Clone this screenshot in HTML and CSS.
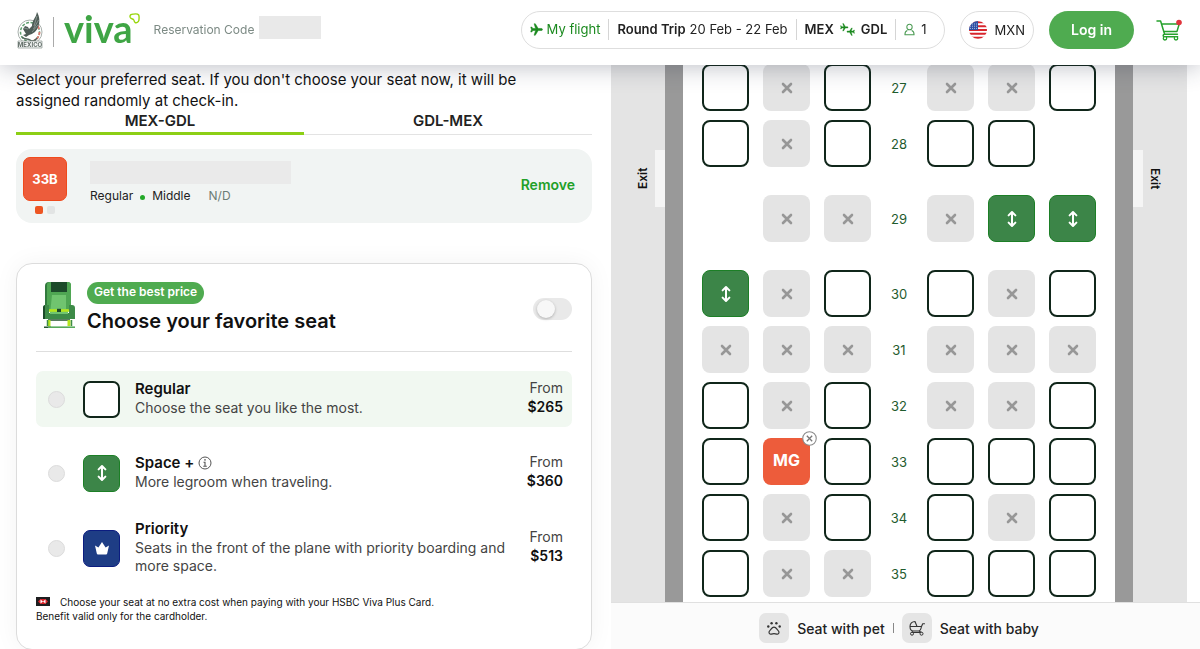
FILE: index.html
```html
<!DOCTYPE html>
<html lang="en">
<head>
    <meta charset="UTF-8">
    <meta name="viewport" content="width=device-width, initial-scale=1.0">
    <title>Viva - Choose your seat</title>
    <link rel="stylesheet" href="styles.css">
</head>
<body>
    <svg class="sprite" aria-hidden="true">
        <symbol id="icon-x" viewBox="0 0 12 12">
            <path d="M2 2l8 8M10 2l-8 8" fill="none" stroke="#979797" stroke-width="2.6" stroke-linecap="round"/>
        </symbol>
        <symbol id="icon-legroom" viewBox="0 0 12 18">
            <path d="M6 2.5v13M2.6 5.4L6 2l3.4 3.4M2.6 12.6L6 16l3.4-3.4" fill="none" stroke="#fff" stroke-width="2" stroke-linecap="round" stroke-linejoin="round"/>
        </symbol>
        <symbol id="icon-plane" viewBox="0 0 24 24">
            <path d="M23 12c0-1.200-1-1.900-2.200-1.900h-5.600L9.800 1.500H7.600l2.700 8.600H5.200L3.300 7.400H1.400L2.600 12l-1.200 4.600h1.900l1.900-2.700h5.100L7.600 22.500h2.200l5.400-8.600h5.600c1.200 0 2.200-.7 2.200-1.900z" fill="#1b8a1f" stroke="#1b8a1f" stroke-width="1"/>
        </symbol>
    </svg>

    <header class="header">
        <a class="brand" href="#" aria-label="Viva home">
            <svg class="crest" viewBox="0 0 28 38">
                <circle cx="14" cy="21" r="12" fill="#fff" stroke="#a8b0ac" stroke-width="1"/>
                <circle cx="14" cy="21" r="9.500" fill="none" stroke="#5f9f70" stroke-width="1.500" stroke-dasharray="3 1.500"/>
                <path d="M23.500 21a9.500 9.500 0 0 1-7 9.200" fill="none" stroke="#e07a72" stroke-width="1.800" stroke-dasharray="3 1.500"/>
                <path d="M20 13a9.500 9.500 0 0 1 3 5" fill="none" stroke="#e07a72" stroke-width="1.800"/>
                <path d="M21 1c3 5 3 11 1 15-1 4-5 7-9 8l-3 2-3-2 3-1-3-5 2-3 3 1 1 2 3-3c0-6 4-8 5-14z" fill="#4e5c57"/>
                <path d="M21 5l-3 10M22.500 9l-5 9M22 14l-6 7M8 17l4 1" stroke="#a8b4ae" stroke-width=".6" fill="none"/>
                <path d="M6 26c3 3 6 1 8 3s5 1 7-2" stroke="#53645d" stroke-width="1.500" fill="none"/>
                <path d="M2 30h24v7H2z" fill="#f3f5f4" stroke="#8a9590" stroke-width=".7"/>
                <text x="14" y="36" text-anchor="middle" class="crest-text">MÉXICO</text>
            </svg>
            <span class="brand-line"></span>
            <span class="logo">viva<svg class="logo-heart" viewBox="0 0 12 12"><path d="M1.200 4.500C.6 1.800 2.800 1 5 1.200c2-.3 4.500-.5 5.600 1 .8 2 .3 4 .2 5.800-.6 2.300-2.800 3.200-4.300 2.200C5.200 9 5.800 7.600 4.600 6.800 3.300 6.300 1.700 6.300 1.200 4.500z" fill="none" stroke="#97d60a" stroke-width="1.500"/></svg></span>
        </a>
        <span class="reservation">Reservation Code</span>
        <span class="reservation-code"></span>

        <button class="trip" type="button">
            <span class="trip-part trip-flight"><svg class="plane" aria-hidden="true"><use href="#icon-plane"/></svg>My flight</span>
            <span class="trip-part"><b>Round Trip</b> 20 Feb - 22 Feb</span>
            <span class="trip-part trip-route"><b>MEX</b>
                <svg class="planes" viewBox="0 0 28 24" aria-hidden="true">
                    <use href="#icon-plane" x="0" y="0" width="16" height="16"/>
                    <use href="#icon-plane" x="-28" y="-24" width="16" height="16" transform="rotate(180)"/>
                </svg>
                <b>GDL</b></span>
            <span class="trip-part trip-people">
                <svg class="person" viewBox="0 0 12 14" aria-hidden="true"><path d="M6 1.200c4 0 3.800 6.200 0 6.200S2 1.200 6 1.200zM3.700 8.200C2 8.600 1 10 1 12.700h10c0-2.700-1-4.100-2.700-4.500" fill="none" stroke="#4a9a52" stroke-width="1.100" stroke-linejoin="round"/></svg>1
            </span>
        </button>
        <button class="currency" type="button">
            <svg class="flag" viewBox="0 0 18 18" aria-hidden="true">
                <clipPath id="flag-clip"><circle cx="9" cy="9" r="9"/></clipPath>
                <g clip-path="url(#flag-clip)">
                    <path d="M0 0h18v18H0z" fill="#fff"/>
                    <path d="M0 1.300h18M0 5.200h18M0 9h18M0 12.800h18M0 16.700h18" stroke="#d8252c" stroke-width="2"/>
                    <path d="M0 0h9v9H0z" fill="#2f50a3"/>
                    <path d="M1 3h7M1 5.200h7M1 7.400h7" stroke="#cfd8ef" stroke-width=".8" stroke-dasharray="1 1"/>
                </g>
            </svg>MXN
        </button>
        <button class="login" type="button">Log in</button>
        <a class="cart" href="#" aria-label="Cart">
            <svg viewBox="0 0 26 22" aria-hidden="true">
                <path d="M1 2h3.600l4 13.200h12.800M5.700 5h17.500l-2.200 7.400H8M8.600 15.200c-1.800 0-2 2.500 0 2.500h13" fill="none" stroke="#26a12c" stroke-width="1.500" stroke-linecap="round" stroke-linejoin="round"/>
                <circle cx="9" cy="19.300" r="1.700" fill="#fff" stroke="#26a12c" stroke-width="1.300"/>
                <circle cx="20" cy="19.300" r="1.700" fill="#fff" stroke="#26a12c" stroke-width="1.300"/>
                <circle cx="23" cy="3.500" r="2.800" fill="#e0343c"/>
            </svg>
        </a>
    </header>

    <main class="page">
        <section class="panel">
            <p class="intro">Select your preferred seat. If you don't choose your seat now, it will be assigned randomly at check-in.</p>
            <div class="tabs" role="tablist">
                <button class="tab active" type="button" role="tab" aria-selected="true">MEX-GDL</button>
                <button class="tab" type="button" role="tab" aria-selected="false">GDL-MEX</button>
            </div>

            <div class="passenger">
                <div class="passenger-seat">
                    <span class="seat-code">33B</span>
                    <span class="legs"><i class="leg on"></i><i class="leg"></i></span>
                </div>
                <div class="passenger-info">
                    <div class="passenger-name"></div>
                    <div class="passenger-meta">
                        <span>Regular</span><i class="dot"></i><span>Middle</span><span class="price-nd">N/D</span>
                    </div>
                </div>
                <button class="remove" type="button">Remove</button>
            </div>

            <div class="card">
                <div class="card-head">
                    <svg class="chair" viewBox="0 0 32 46" aria-hidden="true">
                        <path d="M2 4a4 4 0 0 1 4-4h18a4 4 0 0 1 4 4v24H2z" fill="#327a3e"/>
                        <path d="M4 3a3 3 0 0 1 3-3h18a3 3 0 0 1 3 3v24H4z" fill="#4fa653"/>
                        <path d="M8 0h16v10H8z" fill="#1c4a2a"/>
                        <path d="M9 13h14v19H7z" fill="#70c46f"/>
                        <path d="M0 26a3 3 0 0 1 3-3h3v8h20v-8h3a3 3 0 0 1 3 3v11H0z" fill="#3d8b48"/>
                        <path d="M0 25.500a2.500 2.500 0 0 1 2-2.500V37H0z" fill="#1c4a2a"/>
                        <path d="M7 27h18v5H7z" fill="#70c46f"/>
                        <path d="M6 27.200h20v2.600H6z" fill="#b5e61d"/>
                        <path d="M14 26.800h4v3.200h-4z" fill="#1c4a2a"/>
                        <path d="M5 38h22M1 45.200h7" stroke="#24532f" stroke-width="1.400"/>
                        <path d="M6 38v6M26 38v6" stroke="#b5e61d" stroke-width="3"/>
                        <path d="M4.500 38v6M28.500 38v6" stroke="#3d8b48" stroke-width="1.500"/>
                        <path d="M5 45.200h27" stroke="#57a95b" stroke-width="1.600"/>
                    </svg>
                    <div class="card-title">
                        <span class="badge">Get the best price</span>
                        <h2>Choose your favorite seat</h2>
                    </div>
                    <input class="toggle" type="checkbox" aria-label="Get the best price">
                </div>

                <label class="option highlighted">
                    <input type="radio" name="seat-type">
                    <span class="swatch free"></span>
                    <span class="option-text"><b>Regular</b><span>Choose the seat you like the most.</span></span>
                    <span class="option-price">From<b>$265</b></span>
                </label>
                <label class="option">
                    <input type="radio" name="seat-type">
                    <span class="swatch space"><svg><use href="#icon-legroom"/></svg></span>
                    <span class="option-text">
                        <b>Space + <svg class="info" viewBox="0 0 14 14"><circle cx="7" cy="7" r="6" fill="none" stroke="#555" stroke-width="1"/><path d="M5.500 6.200H7v4M5.300 10.300h3.500" fill="none" stroke="#555" stroke-width="1.100"/><circle cx="7" cy="3.900" r=".8" fill="#555"/></svg></b>
                        <span>More legroom when traveling.</span>
                    </span>
                    <span class="option-price">From<b>$360</b></span>
                </label>
                <label class="option">
                    <input type="radio" name="seat-type">
                    <span class="swatch priority"><svg class="crown" viewBox="0 0 14 13"><path d="M0 3.500l3.400 2L7 0l3.600 5.500 3.400-2L12.200 11.500Q12 12.500 11 12.500H3Q2 12.500 1.800 11.500z" fill="#fff"/></svg></span>
                    <span class="option-text"><b>Priority</b><span>Seats in the front of the plane with priority boarding and more space.</span></span>
                    <span class="option-price">From<b>$513</b></span>
                </label>

                <p class="footnote">
                    <svg class="bank-card" viewBox="0 0 14 9" aria-hidden="true"><path d="M0 0h14v9H0z" fill="#1d1d1f"/><path d="M2 4.500l2.500-2.500h5L12 4.500 9.500 7h-5z" fill="#d8232a"/><path d="M4.500 2.500L7 4.500l-2.500 2zM9.500 2.500L7 4.500l2.500 2z" fill="#fff"/></svg>Choose your seat at no extra cost when paying with your HSBC Viva Plus Card.<br>
                    Benefit valid only for the cardholder.
                </p>
            </div>
        </section>

        <section class="map">
            <div class="plane-body">
                <div class="outside left"><span class="exit">Exit</span><i class="door"></i></div>
                <div class="cabin" id="cabin"></div>
                <div class="outside right"><i class="door"></i><span class="exit">Exit</span></div>
            </div>
            <footer class="legend">
                <span class="legend-icon">
                    <svg viewBox="0 0 16 16" aria-hidden="true"><path d="M8 7.200c2.200 0 2.700 2 4 3.200 2 1.800.8 4.300-1.300 3.700-1.800-.5-3.600-.5-5.400 0C3.200 14.700 2 12.200 4 10.400c1.300-1.200 1.800-3.200 4-3.200z" fill="none" stroke="#333" stroke-width="1.200"/><g fill="#333"><circle cx="2.300" cy="6.500" r="1.200"/><circle cx="5.600" cy="3.200" r="1.200"/><circle cx="10.400" cy="3.200" r="1.200"/><circle cx="13.700" cy="6.500" r="1.200"/></g></svg>
                </span>
                <span>Seat with pet</span>
                <i class="legend-line"></i>
                <span class="legend-icon">
                    <svg viewBox="0 0 16 16" aria-hidden="true"><path d="M1 6.500C1 3.500 3 1.500 6 1.500l2 5M1 6.500h11.500l1.200-2.700h1.800M1 6.500c0 3 1.500 4.500 3.500 4.500h5c2 0 2.500-2 3-4.500M4 11l-1 1.500M10 11l2.500 1.500M3 12.500h9" fill="none" stroke="#333" stroke-width="1.100" stroke-linecap="round" stroke-linejoin="round"/><circle cx="3" cy="13.700" r="1.500" fill="#e5e5e5" stroke="#333"/><circle cx="12.500" cy="13.700" r="1.500" fill="#e5e5e5" stroke="#333"/></svg>
                </span>
                <span>Seat with baby</span>
            </footer>
        </section>
    </main>

    <script>
        // o = free, x = taken, s = Space +, m = selected, - = no seat
        const rows = [
            [27, 'oxoxxo'],
            [28, 'oxooo-'],
            [29, '-xxxss'],
            [30, 'sxooxo'],
            [31, 'xxxxxx'],
            [32, 'oxoxxo'],
            [33, 'omoooo'],
            [34, 'oxooxo'],
            [35, 'oxxooo']
        ];
        const types = { o: 'free', x: 'taken', s: 'space', m: 'selected' };
        const cabin = document.getElementById('cabin');

        function seatContent(type) {
            if (type === 'x') return '<svg class="x"><use href="#icon-x"/></svg>';
            if (type === 's') return '<svg><use href="#icon-legroom"/></svg>';
            if (type === 'm') return 'MG<svg class="seat-remove" viewBox="0 0 14 14"><circle cx="7" cy="7" r="6.300" fill="#fff" stroke="#8a8a8a"/><path d="M4.500 4.500l5 5M9.500 4.500l-5 5" stroke="#777" stroke-width="1.200"/></svg>';
            return '';
        }

        rows.forEach(([number, seats]) => {
            const row = document.createElement('div');
            row.className = number === 29 ? 'row exit-row' : 'row';
            const cells = seats.split('').map((type, i) => {
                if (type === '-') return '<span></span>';
                const disabled = type === 'x' ? ' disabled' : '';
                return `<button type="button" class="seat ${types[type]}" aria-label="${number}${'ABCDEF'[i]}"${disabled}>${seatContent(type)}</button>`;
            });
            cells.splice(3, 0, `<span class="row-number">${number}</span>`);
            row.innerHTML = cells.join('');
            cabin.appendChild(row);
        });
    </script>
</body>
</html>
```
FILE: styles.css
```css
* {
    box-sizing: border-box;
}

body {
    margin: 0;
    height: 100vh;
    overflow: hidden;
    font-family: 'Inter', 'Open Sans', sans-serif;
    font-size: 13px;
    color: #222;
    background: #fff;
}

button {
    padding: 0;
    border: none;
    background: none;
    font: inherit;
    color: inherit;
    cursor: pointer;
}

b {
    font-weight: 600;
}

.sprite {
    display: none;
}

/* Header */
.header {
    position: fixed;
    top: 0;
    left: 0;
    right: 0;
    z-index: 2;
    height: 65px;
    padding: 0 18px 6px 16px;
    display: flex;
    align-items: center;
    background: #fff;
    box-shadow: 0 2px 24px rgba(40, 45, 70, 0.3);
}

.brand {
    display: flex;
    align-items: center;
    text-decoration: none;
}

.crest {
    width: 28px;
    height: 38px;
}

.crest-text {
    font-size: 6px;
    font-weight: bold;
    fill: #5e6a65;
}

.brand-line {
    width: 1px;
    height: 30px;
    margin: 4px 10px 0 9px;
    background: #aaa;
}

.logo {
    position: relative;
    padding: 0 7px 4px 0;
    font-family: 'Lato', sans-serif;
    font-size: 38px;
    line-height: 40px;
    font-weight: bold;
    color: #3fa545;
}

.logo-heart {
    position: absolute;
    top: 5px;
    right: 0;
    width: 11px;
    height: 11px;
}

.reservation {
    margin-left: 14px;
    font-size: 12px;
    color: #7c8a84;
}

.reservation-code {
    width: 62px;
    height: 23px;
    margin: 0 auto 4px 5px;
    background: #e9e9e9;
}

.trip,
.currency {
    height: 38px;
    border: 1px solid #dedede;
    border-radius: 19px;
    display: flex;
    align-items: center;
    white-space: nowrap;
}

.trip {
    padding-right: 9px;
}

.trip-part {
    padding: 0 8px;
    line-height: 21px;
    display: flex;
    align-items: center;
    gap: 4px;
}

.trip-part + .trip-part {
    border-left: 1px solid #d5d5d5;
}

.trip-flight {
    color: #1b8a1f;
}

.trip-route,
.trip-people {
    gap: 6px;
}

.plane {
    width: 13px;
    height: 13px;
}

.planes {
    width: 15px;
    height: 13px;
}

.person {
    width: 11px;
    height: 13px;
}

.currency {
    margin-left: 15px;
    padding: 0 8px;
    gap: 8px;
}

.flag {
    width: 18px;
    height: 18px;
}

.login {
    width: 85px;
    height: 38px;
    margin-left: 15px;
    border-radius: 19px;
    font-size: 14px;
    font-weight: 600;
    color: #fff;
    background: #4fab50;
}

.cart {
    width: 26px;
    height: 22px;
    margin-left: 22px;
}

.page {
    height: 100vh;
    padding-top: 64px;
    display: grid;
    grid-template-columns: 611fr 589fr;
}

/* Left panel */
.panel {
    min-height: 0;
    padding: 5px 19px 0 16px;
    overflow: hidden;
}

.intro {
    margin: 0;
    padding-right: 32px;
    font-size: 15px;
    line-height: 21px;
    color: #111;
}

.tabs {
    display: flex;
}

.tab {
    flex: 1;
    height: 24px;
    padding-bottom: 4px;
    border-bottom: 1px solid #e3e3e3;
    font-size: 15px;
    line-height: 18px;
    font-weight: 600;
}

.tab.active {
    border-bottom: 3px solid #8ccf15;
    padding-bottom: 2px;
}

.passenger {
    height: 74px;
    margin-top: 14px;
    padding: 8px 17px 8px 7px;
    display: flex;
    border-radius: 16px;
    background: #f1f4f3;
}

.passenger-seat {
    display: flex;
    flex-direction: column;
    align-items: center;
    gap: 5px;
}

.seat-code {
    width: 44px;
    height: 44px;
    border: 1px solid #f04a1c;
    border-radius: 7px;
    font-size: 13px;
    line-height: 42px;
    text-align: center;
    font-weight: bold;
    color: #fff;
    background: #ed5c3b;
}

.legs {
    display: flex;
    gap: 4px;
}

.leg {
    width: 8px;
    height: 8px;
    border-radius: 2px;
    background: #e2e4e4;
}

.leg.on {
    background: #ed5523;
}

.passenger-info {
    flex: 1;
    padding: 4px 0 0 23px;
}

.passenger-name {
    width: 201px;
    height: 23px;
    background: #eaeaea;
}

.passenger-meta {
    margin-top: 4px;
    display: flex;
    align-items: center;
    font-size: 12px;
    line-height: 16px;
}

.dot {
    width: 5px;
    height: 5px;
    margin: 2px 7px 0;
    border-radius: 50%;
    background: #22a828;
}

.price-nd {
    margin-left: 18px;
    color: #6c7d75;
}

.remove {
    align-self: center;
    padding-bottom: 4px;
    font-size: 14px;
    font-weight: 600;
    color: #22a028;
}

.card {
    margin-top: 40px;
    padding: 18px 19px 26px;
    border: 1px solid #dcdcdc;
    border-radius: 16px;
    background: #fff;
    box-shadow: 0 0 24px rgba(0, 0, 0, 0.05);
}

.card-head {
    height: 70px;
    margin-bottom: 19px;
    padding-left: 7px;
    display: flex;
    align-items: flex-start;
    border-bottom: 1px solid #dedede;
}

.chair {
    width: 32px;
    height: 46px;
    margin-right: 12px;
}

.card-title {
    flex: 1;
}

.badge {
    display: block;
    width: fit-content;
    height: 22px;
    padding: 0 7px;
    border-radius: 11px;
    font-size: 12px;
    line-height: 20px;
    font-weight: 600;
    color: #fff;
    background: #4fab50;
}

.card-title h2 {
    margin: 5px 0 0;
    font-size: 20px;
    line-height: 24px;
    font-weight: 600;
    color: #111;
}

.toggle {
    appearance: none;
    width: 39px;
    height: 22px;
    margin: 16px 0 0;
    padding: 2px 4px;
    border-radius: 11px;
    background: #e9e9e9;
}

.toggle::before {
    content: '';
    display: block;
    width: 18px;
    height: 18px;
    border-radius: 50%;
    background: #f7f7f7;
    box-shadow: 0 1px 3px rgba(0, 0, 0, 0.25);
}

.option {
    min-height: 56px;
    margin-bottom: 18px;
    padding: 0 9px 0 12px;
    display: flex;
    align-items: center;
    border-radius: 7px;
}

.option.highlighted {
    background: #f1f8f1;
}

.option input {
    appearance: none;
    flex: none;
    width: 17px;
    height: 17px;
    margin: 0 18px 0 0;
    border: 1px solid #dcdcdc;
    border-radius: 50%;
    background: #e9e9e9;
}

.swatch {
    flex: none;
    width: 37px;
    height: 37px;
    margin-right: 15px;
    border-radius: 7px;
    display: flex;
    align-items: center;
    justify-content: center;
}

.free {
    border: 2px solid #10261a;
    background: #fff;
}

.space {
    border: 1px solid #1c7f26;
    background: #3c8548;
}

.space svg {
    width: 12px;
    height: 18px;
}

.priority {
    border: 1px solid #0b1c80;
    background: #1e3d85;
}

.crown {
    width: 14px;
    height: 13px;
}

.option-text {
    flex: 1;
    padding-bottom: 2px;
    font-size: 14px;
    line-height: 18px;
    color: #444;
}

.option-text b {
    display: flex;
    align-items: center;
    gap: 4px;
    font-size: 15px;
    line-height: 20px;
    color: #111;
}

.info {
    width: 14px;
    height: 14px;
}

.option-price {
    width: 50px;
    padding-bottom: 4px;
    text-align: right;
    font-size: 14px;
    line-height: 19px;
    color: #444;
}

.option-price b {
    display: block;
    color: #111;
}

.footnote {
    margin: 0;
    font-size: 10px;
    line-height: 14px;
    color: #111;
}

.bank-card {
    width: 14px;
    height: 9px;
    margin-right: 10px;
}

/* Seat map */
.map {
    min-height: 0;
    display: flex;
    flex-direction: column;
}

.plane-body {
    flex: 1;
    min-height: 0;
    margin-right: 13px;
    display: flex;
    overflow: hidden;
}

.outside {
    flex: 1;
    padding-top: 86px;
    display: flex;
    align-items: flex-start;
    background: #e4e4e4;
}

.outside.left {
    justify-content: flex-end;
}

.door {
    width: 10px;
    height: 57px;
    background: #f5f5f5;
}

.exit {
    height: 57px;
    margin: 0 5px;
    writing-mode: vertical-rl;
    text-align: center;
    font-size: 12px;
    line-height: 14px;
    font-weight: 600;
    color: #111;
}

.left .exit {
    transform: rotate(180deg);
}

.cabin {
    padding: 0 19px;
    border: solid #999;
    border-width: 0 18px;
    box-sizing: content-box;
    background: #fff;
}

.row {
    margin-bottom: 9px;
    display: grid;
    grid-template-columns: repeat(3, 47px) 28px repeat(3, 47px);
    gap: 14px;
    align-items: center;
}

.exit-row {
    margin: 28px 0;
}

.row-number {
    text-align: center;
    color: #1f5c2e;
}

.seat {
    position: relative;
    width: 47px;
    height: 47px;
    border-radius: 8px;
    display: flex;
    align-items: center;
    justify-content: center;
}

.taken {
    background: #e4e4e4;
}

.taken .x {
    width: 12px;
    height: 12px;
}

.selected {
    padding-bottom: 4px;
    font-size: 16px;
    font-weight: bold;
    color: #fff;
    background: #ed5c3b;
}

.seat-remove {
    position: absolute;
    top: -7px;
    right: -7px;
    width: 15px;
    height: 15px;
}

.legend {
    height: 47px;
    padding: 4px 13px 0 0;
    border-top: 1px solid #e0e0e0;
    display: flex;
    align-items: center;
    justify-content: center;
    gap: 8px;
    font-size: 14px;
    font-weight: 500;
    background: #fbfbfb;
}

.legend-icon {
    width: 30px;
    height: 30px;
    border-radius: 7px;
    display: flex;
    align-items: center;
    justify-content: center;
    background: #e5e5e5;
}

.legend-icon svg {
    width: 16px;
    height: 16px;
}

.legend-line {
    width: 1px;
    height: 10px;
    background: #888;
}
```
